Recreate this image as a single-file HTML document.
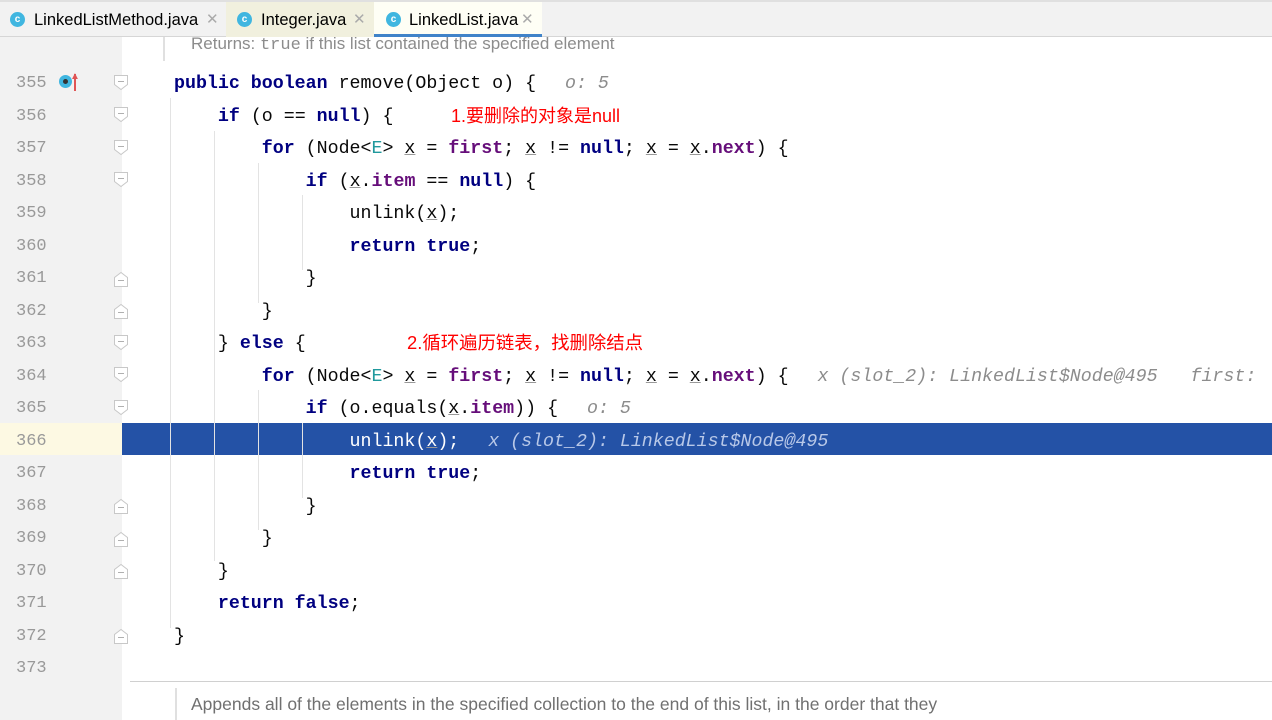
<!DOCTYPE html>
<html><head><meta charset="utf-8"><style>
*{margin:0;padding:0;box-sizing:border-box}
body{width:1272px;height:720px;overflow:hidden;background:#fff;position:relative;font-family:"Liberation Sans",sans-serif}
.tabs{position:absolute;left:0;top:0;width:1272px;height:37px;background:#f2f2f2;border-top:2px solid #e0e0e0;border-bottom:1px solid #d6d6d6}
.tab{position:absolute;top:0;height:35px;font-size:16.5px;color:#000;line-height:36px}
.ic{position:absolute;top:10px;width:15px;height:15px;border-radius:50%;background:#40b6e0;color:#fff;font-size:10px;line-height:15px;text-align:center;font-weight:bold}
.x{position:absolute;top:0;color:#aaa;font-size:15px}
.gut{position:absolute;left:0;top:37px;width:122px;height:683px;background:#f2f2f2}
.ln{position:absolute;left:16px;width:40px;font-family:"Liberation Mono",monospace;font-size:17px;color:#999;line-height:32px;margin-top:2px}
.code{position:absolute;left:174px;font-family:"Liberation Mono",monospace;font-size:18.3px;color:#080808;white-space:pre;line-height:32px;margin-top:2px}
.k{color:#000080;font-weight:bold}
.f{color:#660e7a;font-weight:bold}
.u{text-decoration:underline;text-decoration-color:#999}
.h{color:#8c8c8c;font-style:italic;margin-left:7px}
.r{position:absolute;color:#f00;font-family:"Liberation Sans","Noto Sans CJK SC",sans-serif;font-size:18px;line-height:32px}
.g{position:absolute;width:1px;background:#e3e3e3}
</style></head><body>
<div class="tabs">
<div class="tab" style="left:10px"><span class="ic" style="left:0">c</span><span style="position:absolute;left:24px;white-space:nowrap">LinkedListMethod.java</span><span class="x" style="left:196px">✕</span></div>
<div style="position:absolute;left:226px;top:0;width:148px;height:35px;background:#f1f0de"></div>
<div class="tab" style="left:237px"><span class="ic" style="left:0">c</span><span style="position:absolute;left:24px;white-space:nowrap">Integer.java</span><span class="x" style="left:116px">✕</span></div>
<div style="position:absolute;left:374px;top:0;width:168px;height:35px;background:#fefef5;border-bottom:3px solid #4083c9"></div>
<div class="tab" style="left:386px"><span class="ic" style="left:0">c</span><span style="position:absolute;left:23px;white-space:nowrap">LinkedList.java</span><span class="x" style="left:135px">✕</span></div>
</div>
<div class="gut"></div>
<div style="position:absolute;left:0;top:423px;width:122px;height:32px;background:#fdf9e3"></div>
<div style="position:absolute;left:122px;top:423px;width:1150px;height:32px;background:#2452a6"></div>
<div style="position:absolute;left:163px;top:37px;width:2px;height:24px;background:#e0e0e0"></div>
<div style="position:absolute;left:191px;top:33px;font-size:17px;color:#8c8c8c;line-height:22px;white-space:nowrap">Returns: <span style="font-family:'Liberation Mono',monospace">true</span> if this list contained the specified element</div>
<div style="position:absolute;left:130px;top:681px;width:1142px;height:1px;background:#d0d0d0"></div>
<div style="position:absolute;left:175px;top:688px;width:2px;height:32px;background:#e0e0e0"></div>
<div style="position:absolute;left:191px;top:692px;font-size:17.5px;color:#707070;line-height:24px;white-space:nowrap">Appends all of the elements in the specified collection to the end of this list, in the order that they</div>
<div class="g" style="left:170px;top:98px;height:530px"></div>
<div class="g" style="left:214px;top:131px;height:430px"></div>
<div class="g" style="left:258px;top:163px;height:140px"></div>
<div class="g" style="left:258px;top:390px;height:140px"></div>
<div class="g" style="left:302px;top:195px;height:75px"></div>
<div class="g" style="left:302px;top:423px;height:75px"></div>
<div style="position:absolute;left:59px;top:75px;width:13px;height:13px;border-radius:50%;background:#40b6e0;border:3px solid #40b6e0"><div style="width:5px;height:5px;border-radius:50%;background:#333;margin:1px"></div></div>
<div style="position:absolute;left:74px;top:74px;width:2px;height:17px;background:#e05555"></div>
<div style="position:absolute;left:70px;top:73px;color:#e05555;font-size:10px;line-height:8px">▲</div>

<div class="ln" style="top:66px">355</div><div class="ln" style="top:98.5px">356</div><div class="ln" style="top:131px">357</div><div class="ln" style="top:163.5px">358</div><div class="ln" style="top:196px">359</div><div class="ln" style="top:228.5px">360</div><div class="ln" style="top:261px">361</div><div class="ln" style="top:293.5px">362</div><div class="ln" style="top:326px">363</div><div class="ln" style="top:358.5px">364</div><div class="ln" style="top:391px">365</div><div class="ln" style="top:423.5px">366</div><div class="ln" style="top:456px">367</div><div class="ln" style="top:488.5px">368</div><div class="ln" style="top:521px">369</div><div class="ln" style="top:553.5px">370</div><div class="ln" style="top:586px">371</div><div class="ln" style="top:618.5px">372</div><div class="ln" style="top:651px">373</div>

<svg style="position:absolute;left:0;top:0" width="140" height="720">
<g fill="#fff" stroke="#c8c8c8" stroke-width="1">
<path d="M114.5 75.5h13v9l-6.5 5-6.5-5z"/><path d="M114.5 107.5h13v9l-6.5 5-6.5-5z"/><path d="M114.5 140.5h13v9l-6.5 5-6.5-5z"/><path d="M114.5 172.5h13v9l-6.5 5-6.5-5z"/>
<path d="M114.5 335.5h13v9l-6.5 5-6.5-5z"/><path d="M114.5 367.5h13v9l-6.5 5-6.5-5z"/><path d="M114.5 400.5h13v9l-6.5 5-6.5-5z"/>
<path d="M114.5 286.5h13v-9l-6.5-5-6.5 5z"/><path d="M114.5 318.5h13v-9l-6.5-5-6.5 5z"/><path d="M114.5 513.5h13v-9l-6.5-5-6.5 5z"/><path d="M114.5 546.5h13v-9l-6.5-5-6.5 5z"/><path d="M114.5 578.5h13v-9l-6.5-5-6.5 5z"/><path d="M114.5 643.5h13v-9l-6.5-5-6.5 5z"/>
</g>
<g stroke="#b0b0b0"><path d="M118 81.5h6M118 113.5h6M118 146.5h6M118 178.5h6M118 341.5h6M118 373.5h6M118 406.5h6M118 280.5h6M118 312.5h6M118 507.5h6M118 540.5h6M118 572.5h6M118 637.5h6"/></g>
</svg>

<div class="code" style="top:66px"><span class="k">public boolean</span> remove(Object o) {  <span class="h">o: 5</span></div>
<div class="code" style="top:98.5px">    <span class="k">if</span> (o == <span class="k">null</span>) {</div>
<div class="r" style="left:451px;top:100px">1.要删除的对象是null</div>
<div class="code" style="top:131px">        <span class="k">for</span> (Node&lt;<span style="color:#20999d">E</span>&gt; <span class="u">x</span> = <span class="f">first</span>; <span class="u">x</span> != <span class="k">null</span>; <span class="u">x</span> = <span class="u">x</span>.<span class="f">next</span>) {</div>
<div class="code" style="top:163.5px">            <span class="k">if</span> (<span class="u">x</span>.<span class="f">item</span> == <span class="k">null</span>) {</div>
<div class="code" style="top:196px">                unlink(<span class="u">x</span>);</div>
<div class="code" style="top:228.5px">                <span class="k">return true</span>;</div>
<div class="code" style="top:261px">            }</div>
<div class="code" style="top:293.5px">        }</div>
<div class="code" style="top:326px">    } <span class="k">else</span> {</div>
<div class="r" style="left:407px;top:327px;font-size:18.4px">2.循环遍历链表，找删除结点</div>
<div class="code" style="top:358.5px">        <span class="k">for</span> (Node&lt;<span style="color:#20999d">E</span>&gt; <span class="u">x</span> = <span class="f">first</span>; <span class="u">x</span> != <span class="k">null</span>; <span class="u">x</span> = <span class="u">x</span>.<span class="f">next</span>) {  <span class="h">x (slot_2): LinkedList$Node@495   first: </span></div>
<div class="code" style="top:391px">            <span class="k">if</span> (o.equals(<span class="u">x</span>.<span class="f">item</span>)) {  <span class="h">o: 5</span></div>
<div class="code" style="top:423.5px;color:#fff">                unlink(<span class="u">x</span>);  <span class="h" style="color:#b8c8e8">x (slot_2): LinkedList$Node@495</span></div>
<div class="code" style="top:456px">                <span class="k">return true</span>;</div>
<div class="code" style="top:488.5px">            }</div>
<div class="code" style="top:521px">        }</div>
<div class="code" style="top:553.5px">    }</div>
<div class="code" style="top:586px">    <span class="k">return false</span>;</div>
<div class="code" style="top:618.5px">}</div>
</body></html>
